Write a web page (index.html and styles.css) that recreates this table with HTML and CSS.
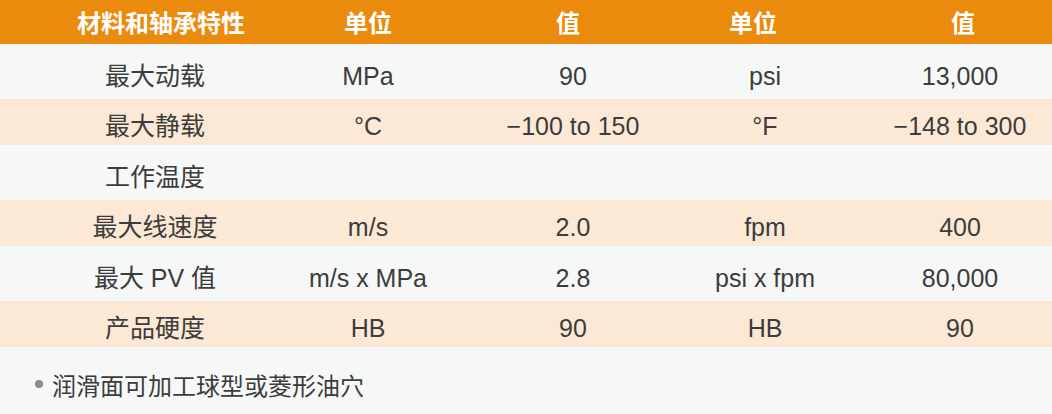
FILE: index.html
```html
<!DOCTYPE html>
<html lang="zh-CN">
<head>
<meta charset="utf-8">
<link rel="stylesheet" href="styles.css">
</head>
<body>
<div class="table">
  <div class="row head">
    <div class="c c1">材料和轴承特性</div>
    <div class="c c2">单位</div>
    <div class="c c3">值</div>
    <div class="c c4">单位</div>
    <div class="c c5">值</div>
  </div>
  <div class="row light">
    <div class="c c1">最大动载</div>
    <div class="c c2">MPa</div>
    <div class="c c3">90</div>
    <div class="c c4">psi</div>
    <div class="c c5">13,000</div>
  </div>
  <div class="row tan">
    <div class="c c1">最大静载</div>
    <div class="c c2">°C</div>
    <div class="c c3">−100 to 150</div>
    <div class="c c4">°F</div>
    <div class="c c5">−148 to 300</div>
  </div>
  <div class="row light">
    <div class="c c1">工作温度</div>
    <div class="c c2"></div>
    <div class="c c3"></div>
    <div class="c c4"></div>
    <div class="c c5"></div>
  </div>
  <div class="row tan">
    <div class="c c1">最大线速度</div>
    <div class="c c2">m/s</div>
    <div class="c c3">2.0</div>
    <div class="c c4">fpm</div>
    <div class="c c5">400</div>
  </div>
  <div class="row light">
    <div class="c c1">最大 PV 值</div>
    <div class="c c2">m/s x MPa</div>
    <div class="c c3">2.8</div>
    <div class="c c4">psi x fpm</div>
    <div class="c c5">80,000</div>
  </div>
  <div class="row tan">
    <div class="c c1">产品硬度</div>
    <div class="c c2">HB</div>
    <div class="c c3">90</div>
    <div class="c c4">HB</div>
    <div class="c c5">90</div>
  </div>
</div>
<div class="note">
  <span class="dot"></span>
  <span class="note-text">润滑面可加工球型或菱形油穴</span>
</div>
</body>
</html>
```

FILE: styles.css
```css
html, body {
  margin: 0;
  padding: 0;
  background: #f6f8f7;
}
body {
  width: 1052px;
  height: 414px;
  overflow: hidden;
  font-family: "Liberation Sans", "Noto Sans CJK SC", sans-serif;
  color: #3c3c3c;
}
.row {
  display: grid;
  grid-template-columns: 262px 212px 198px 186px 194px;
  align-items: center;
  box-sizing: border-box;
  padding-top: 8px;
}
.c {
  text-align: center;
  white-space: nowrap;
  font-size: 25px;
  line-height: 30px;
}
.c1 { padding-left: 48px; }
.c5 { padding-left: 10px; }
.head {
  background: #eb8b0d;
  height: 44px;
  padding-top: 0;
}
.head .c {
  color: #ffffff;
  font-weight: bold;
  font-size: 24px;
  font-family: "Noto Sans CJK SC", sans-serif;
}
.head .c1 { padding-left: 60px; }
.head .c3 { padding-right: 10px; }
.head .c4 { padding-right: 24px; }
.head .c5 { padding-left: 16px; }
.light {
  background: #f6f8f7;
  height: 55px;
}
.tan {
  background: #fce9d5;
  height: 46px;
}
.note {
  display: flex;
  align-items: center;
  height: 68px;
  padding-left: 35px;
  padding-top: 6px;
  box-sizing: border-box;
}
.dot {
  width: 8px;
  height: 8px;
  border-radius: 50%;
  background: #8a8a8a;
  margin-right: 9px;
}
.note-text {
  font-family: "Noto Sans CJK SC", sans-serif;
  font-size: 24px;
  letter-spacing: 0;
  color: #3c3c3c;
}
```
